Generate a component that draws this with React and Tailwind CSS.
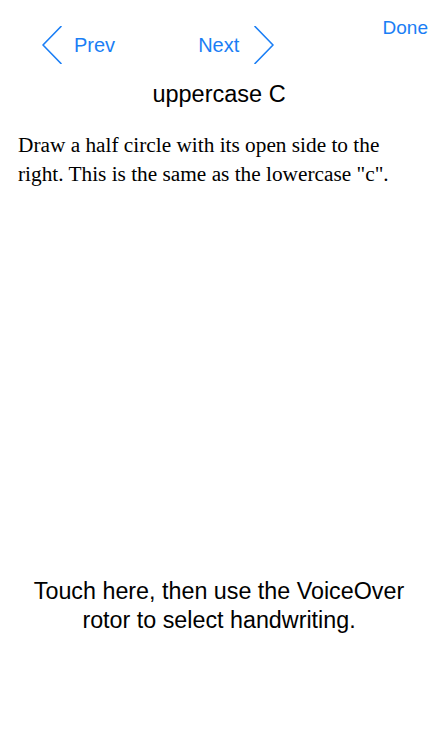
import React from "react";

const sans = { fontFamily: '"Liberation Sans", Arial, sans-serif' };
const serif = { fontFamily: '"Liberation Serif", "Times New Roman", serif' };

function ChevronLeft() {
  return (
    <svg width="20" height="38" viewBox="0 0 20 38" fill="none">
      <path d="M19 0.5 L1 19 L19 37.5" stroke="#1a7ef5" strokeWidth="1.6" strokeLinecap="round" strokeLinejoin="round" />
    </svg>
  );
}

function ChevronRight() {
  return (
    <svg width="20" height="38" viewBox="0 0 20 38" fill="none">
      <path d="M1 0.5 L19 19 L1 37.5" stroke="#1a7ef5" strokeWidth="1.6" strokeLinecap="round" strokeLinejoin="round" />
    </svg>
  );
}

export default function App() {
  return (
    <div className="w-[438px] h-[750px] bg-white flex flex-col overflow-hidden" style={sans}>
      <div className="flex justify-between items-start">
        <div className="flex items-center pt-[26px] pl-[42px]">
          <ChevronLeft />
          <span className="ml-[12px] text-[20px] leading-[20px] text-[#1a7ef5]">Prev</span>
          <span className="ml-[83px] text-[20px] leading-[20px] text-[#1a7ef5]">Next</span>
          <span className="ml-[15px]"><ChevronRight /></span>
        </div>
        <div className="pt-[18px] pr-[10px] text-[19px] leading-[19px] text-[#1a7ef5]">Done</div>
      </div>
      <div className="mt-[19px] text-center text-[23.5px] leading-[23px] text-black">uppercase C</div>
      <p className="mt-[25px] px-[18px] text-[21.3px] leading-[29px] text-black" style={serif}>
        Draw a half circle with its open side to the right. This is the same as the lowercase "c".
      </p>
      <p className="mt-[388px] text-center text-[23.3px] leading-[29px] text-black">
        Touch here, then use the VoiceOver
        <br />
        rotor to select handwriting.
      </p>
    </div>
  );
}
